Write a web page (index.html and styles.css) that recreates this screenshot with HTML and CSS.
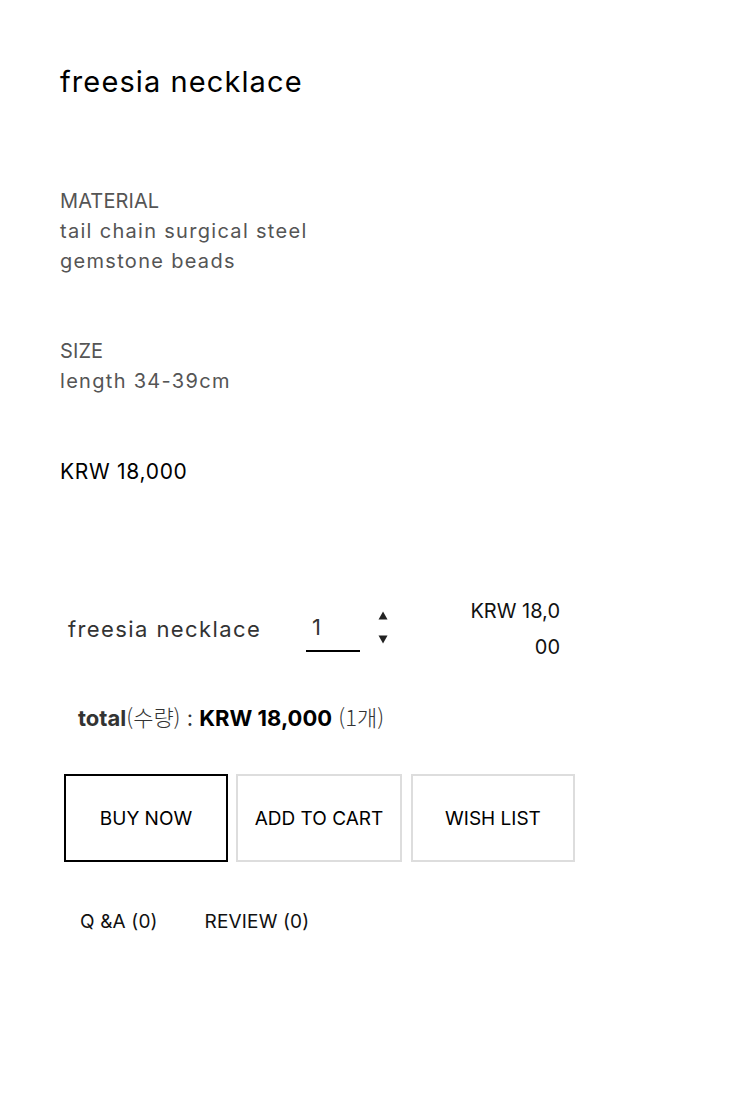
FILE: index.html
```html
<!DOCTYPE html>
<html lang="ko">
<head>
<meta charset="utf-8">
<title>freesia necklace</title>
<link rel="stylesheet" href="styles.css">
</head>
<body>
<main class="product">
  <h1 class="title">freesia necklace</h1>

  <section class="info">
    <p class="label">MATERIAL</p>
    <p>tail chain surgical steel</p>
    <p>gemstone beads</p>
  </section>

  <section class="info info-size">
    <p class="label">SIZE</p>
    <p>length 34-39cm</p>
  </section>

  <p class="price">KRW 18,000</p>

  <div class="option-row">
    <span class="opt-name">freesia necklace</span>
    <span class="qty">1</span>
    <span class="spin">
      <svg width="10" height="9" viewBox="0 0 10 9"><path d="M5 0.5 L9.5 8.5 L0.5 8.5 Z" fill="#222"/></svg>
      <svg width="10" height="9" viewBox="0 0 10 9"><path d="M0.5 0.5 L9.5 0.5 L5 8.5 Z" fill="#222"/></svg>
    </span>
    <span class="opt-price">KRW 18,000</span>
  </div>

  <p class="total"><b class="t-label">total</b><span class="ko">(수량)</span> : <b class="t-sum">KRW 18,000</b> <span class="ko">(1개)</span></p>

  <div class="actions">
    <a class="btn btn-buy">BUY NOW</a>
    <a class="btn btn-cart">ADD TO CART</a>
    <a class="btn btn-wish">WISH LIST</a>
  </div>

  <nav class="tabs">
    <a class="tab">Q &amp;A (0)</a>
    <a class="tab">REVIEW (0)</a>
  </nav>
</main>
</body>
</html>
```

FILE: styles.css
```css
* { box-sizing: border-box; }
html, body { margin: 0; padding: 0; background: #fff; }
body {
  font-family: "Inter", "Noto Sans CJK KR", sans-serif;
  color: #000;
}
.product {
  padding: 62px 0 0 60px;
}
.title {
  margin: 0;
  font-size: 29px;
  font-weight: 400;
  line-height: 40px;
  letter-spacing: 1.1px;
}
.info {
  margin-top: 84px;
  color: #555;
  font-size: 20px;
  line-height: 30px;
  letter-spacing: 1.3px;
}
.info p { margin: 0; }
.info .label { letter-spacing: 0.1px; }
.info-size { margin-top: 60px; }
.price {
  margin: 61px 0 0;
  font-size: 21px;
  line-height: 30px;
  letter-spacing: 0.7px;
}
.option-row {
  margin-top: 106px;
  display: flex;
  align-items: center;
  height: 72px;
}
.opt-name {
  width: 246px;
  padding-left: 8px;
  font-size: 22px;
  color: #333;
  letter-spacing: 1.4px;
}
.qty {
  width: 54px;
  height: 44px;
  padding: 6px 0 0 6px;
  border-bottom: 2px solid #000;
  font-size: 22px;
  color: #333;
  margin-top: 2px;
}
.spin {
  display: flex;
  flex-direction: column;
  gap: 15px;
  margin-left: 18px;
  margin-top: -3px;
}
.spin svg { display: block; }
.opt-price {
  width: 92px;
  margin-left: 80px;
  text-align: right;
  font-size: 20px;
  line-height: 36px;
  word-break: break-all;
  color: #111;
}
.total {
  margin: 34px 0 0 18px;
  font-size: 22px;
  line-height: 34px;
  color: #333;
}
.t-label { font-weight: 700; color: #333; }
.t-sum { font-weight: 700; color: #000; }
.ko { font-family: "Noto Sans CJK KR", sans-serif; font-weight: 300; }
.actions {
  display: flex;
  margin: 39px 0 0 4px;
}
.btn {
  display: flex;
  align-items: center;
  justify-content: center;
  height: 88px;
  font-size: 19px;
  color: #000;
  border: 2px solid #ddd;
  text-decoration: none;
}
.btn-buy { width: 164px; border-color: #000; }
.btn-cart { width: 166px; margin-left: 8px; }
.btn-wish { width: 164px; margin-left: 9px; }
.tabs {
  display: flex;
  margin: 45px 0 0 20px;
  gap: 47px;
  font-size: 19px;
  line-height: 30px;
  letter-spacing: 0.15px;
}
.tab { color: #111; text-decoration: none; }
```
